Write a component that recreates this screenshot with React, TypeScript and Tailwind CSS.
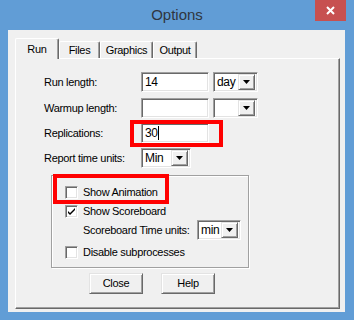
import React from "react";

const sunken =
  "border border-t-[#a0a0a0] border-l-[#a0a0a0] border-b-white border-r-white shadow-[inset_1px_1px_0_#696969,inset_-1px_-1px_0_#e3e3e3]";
const raised =
  "border border-t-[#e3e3e3] border-l-[#e3e3e3] border-b-[#696969] border-r-[#696969] shadow-[inset_1px_1px_0_#ffffff,inset_-1px_-1px_0_#a0a0a0]";

function DropButton() {
  return (
    <div className={`w-[17px] h-[16px] bg-[#f0f0f0] flex items-center justify-center ${raised}`}>
      <svg width="7" height="4" viewBox="0 0 7 4">
        <path d="M0 0h7L3.5 4z" fill="#000" />
      </svg>
    </div>
  );
}

function Select({ value, className }: { value: string; className: string }) {
  return (
    <div className={`h-[20px] bg-white flex items-center pr-[2px] ${sunken} ${className}`}>
      <span className="flex-1 pl-[3px] text-[12px] leading-none">{value}</span>
      <DropButton />
    </div>
  );
}

function TextBox({ value, caret }: { value: string; caret?: boolean }) {
  return (
    <div className={`w-[68px] h-[20px] bg-white flex items-center pl-[3px] ${sunken}`}>
      <span className="text-[12px] leading-none">{value}</span>
      {caret && <span className="w-px h-[14px] bg-black" />}
    </div>
  );
}

function CheckBox({ checked, label }: { checked?: boolean; label: string }) {
  return (
    <div className="flex items-center h-[13px]">
      <div className={`w-[13px] h-[13px] bg-white flex items-center justify-center ${sunken}`}>
        {checked && (
          <svg width="9" height="9" viewBox="0 0 9 9">
            <path d="M1 4l2 2 5-5v2l-5 5-2-2z" fill="#000" />
          </svg>
        )}
      </div>
      <span className="ml-[5px]">{label}</span>
    </div>
  );
}

function Row({ label, children }: { label: string; children: React.ReactNode }) {
  return (
    <div className="flex items-center h-[20px]">
      <span className="w-[97px]">{label}</span>
      {children}
    </div>
  );
}

export default function App() {
  const tabs = [
    { name: "Files", w: "w-[41px]" },
    { name: "Graphics", w: "w-[53px]" },
    { name: "Output", w: "w-[44px]" },
  ];

  return (
    <div className="w-[354px] h-[320px] bg-[#619dd6] flex flex-col font-['Liberation_Sans',Arial,sans-serif] text-black text-[11px] tracking-[-0.3px]">
      {/* Title bar */}
      <div className="relative h-[30px] flex items-center justify-center">
        <span className="text-[15px] tracking-normal text-[#2f3640]">Options</span>
        <div className="absolute top-0 right-[8px] w-[31px] h-[21px] bg-[#c75050] flex items-center justify-center">
          <svg width="9" height="9" viewBox="0 0 9 9">
            <path d="M1 1l7 7M8 1L1 8" stroke="#fff" strokeWidth="2" />
          </svg>
        </div>
      </div>

      {/* Client area */}
      <div className="ml-[8px] w-[337px] h-[282px] bg-[#f0f0f0] pl-[7px] pt-[8px] flex flex-col">
        {/* Tabs */}
        <div className="flex items-end h-[20px]">
          <div className="relative z-10 -mb-px w-[44px] h-[21px] bg-[#f0f0f0] flex items-center justify-center rounded-t-[2px] border-t border-l border-r border-t-white border-l-white border-r-[#696969] shadow-[inset_-1px_0_0_#a0a0a0]">
            Run
          </div>
          {tabs.map((t) => (
            <div
              key={t.name}
              className={`${t.w} h-[17px] flex items-center justify-center rounded-t-[2px] border-t border-l border-r border-t-white border-l-white border-r-[#696969] shadow-[inset_-1px_0_0_#a0a0a0]`}
            >
              {t.name}
            </div>
          ))}
        </div>

        {/* Panel */}
        <div className="w-[325px] h-[251px] border border-t-white border-l-white border-r-[#696969] border-b-[#696969] shadow-[inset_-1px_-1px_0_#a0a0a0] flex flex-col pl-[28px]">
          <div className="mt-[13px]">
            <Row label="Run length:">
              <TextBox value="14" />
              <Select value="day" className="ml-[4px] w-[45px]" />
            </Row>
          </div>
          <div className="mt-[6px]">
            <Row label="Warmup length:">
              <TextBox value="" />
              <Select value="" className="ml-[4px] w-[45px]" />
            </Row>
          </div>
          <div className="mt-[5px]">
            <Row label="Replications:">
              <div className="relative">
                <TextBox value="30" caret />
                <div className="absolute -left-[11px] -top-[3px] w-[93px] h-[27px] border-4 border-[#ff0000]" />
              </div>
            </Row>
          </div>
          <div className="mt-[5px]">
            <Row label="Report time units:">
              <Select value="Min" className="w-[50px]" />
            </Row>
          </div>

          {/* Group box */}
          <div className="relative mt-[7px] ml-[7px] w-[198px] h-[93px] border border-[#a0a0a0] shadow-[inset_1px_1px_0_#ffffff,1px_1px_0_#ffffff] pl-[13px] pt-[10px] flex flex-col">
            <CheckBox label="Show Animation" />
            <div className="absolute left-[1px] -top-[2px] w-[116px] h-[30px] border-4 border-[#ff0000]" />
            <div className="mt-[6px]">
              <CheckBox checked label="Show Scoreboard" />
            </div>
            <div className="mt-[2px] ml-[18px] flex items-center h-[20px]">
              <span className="w-[114px]">Scoreboard Time units:</span>
              <Select value="min" className="w-[44px]" />
            </div>
            <div className="mt-[6px]">
              <CheckBox label="Disable subprocesses" />
            </div>
          </div>

          {/* Buttons */}
          <div className="mt-[5px] ml-[45px] flex gap-[18px]">
            <div className={`w-[54px] h-[21px] bg-[#f0f0f0] flex items-center justify-center ${raised}`}>
              Close
            </div>
            <div className={`w-[54px] h-[21px] bg-[#f0f0f0] flex items-center justify-center ${raised}`}>
              Help
            </div>
          </div>
        </div>
      </div>
    </div>
  );
}
